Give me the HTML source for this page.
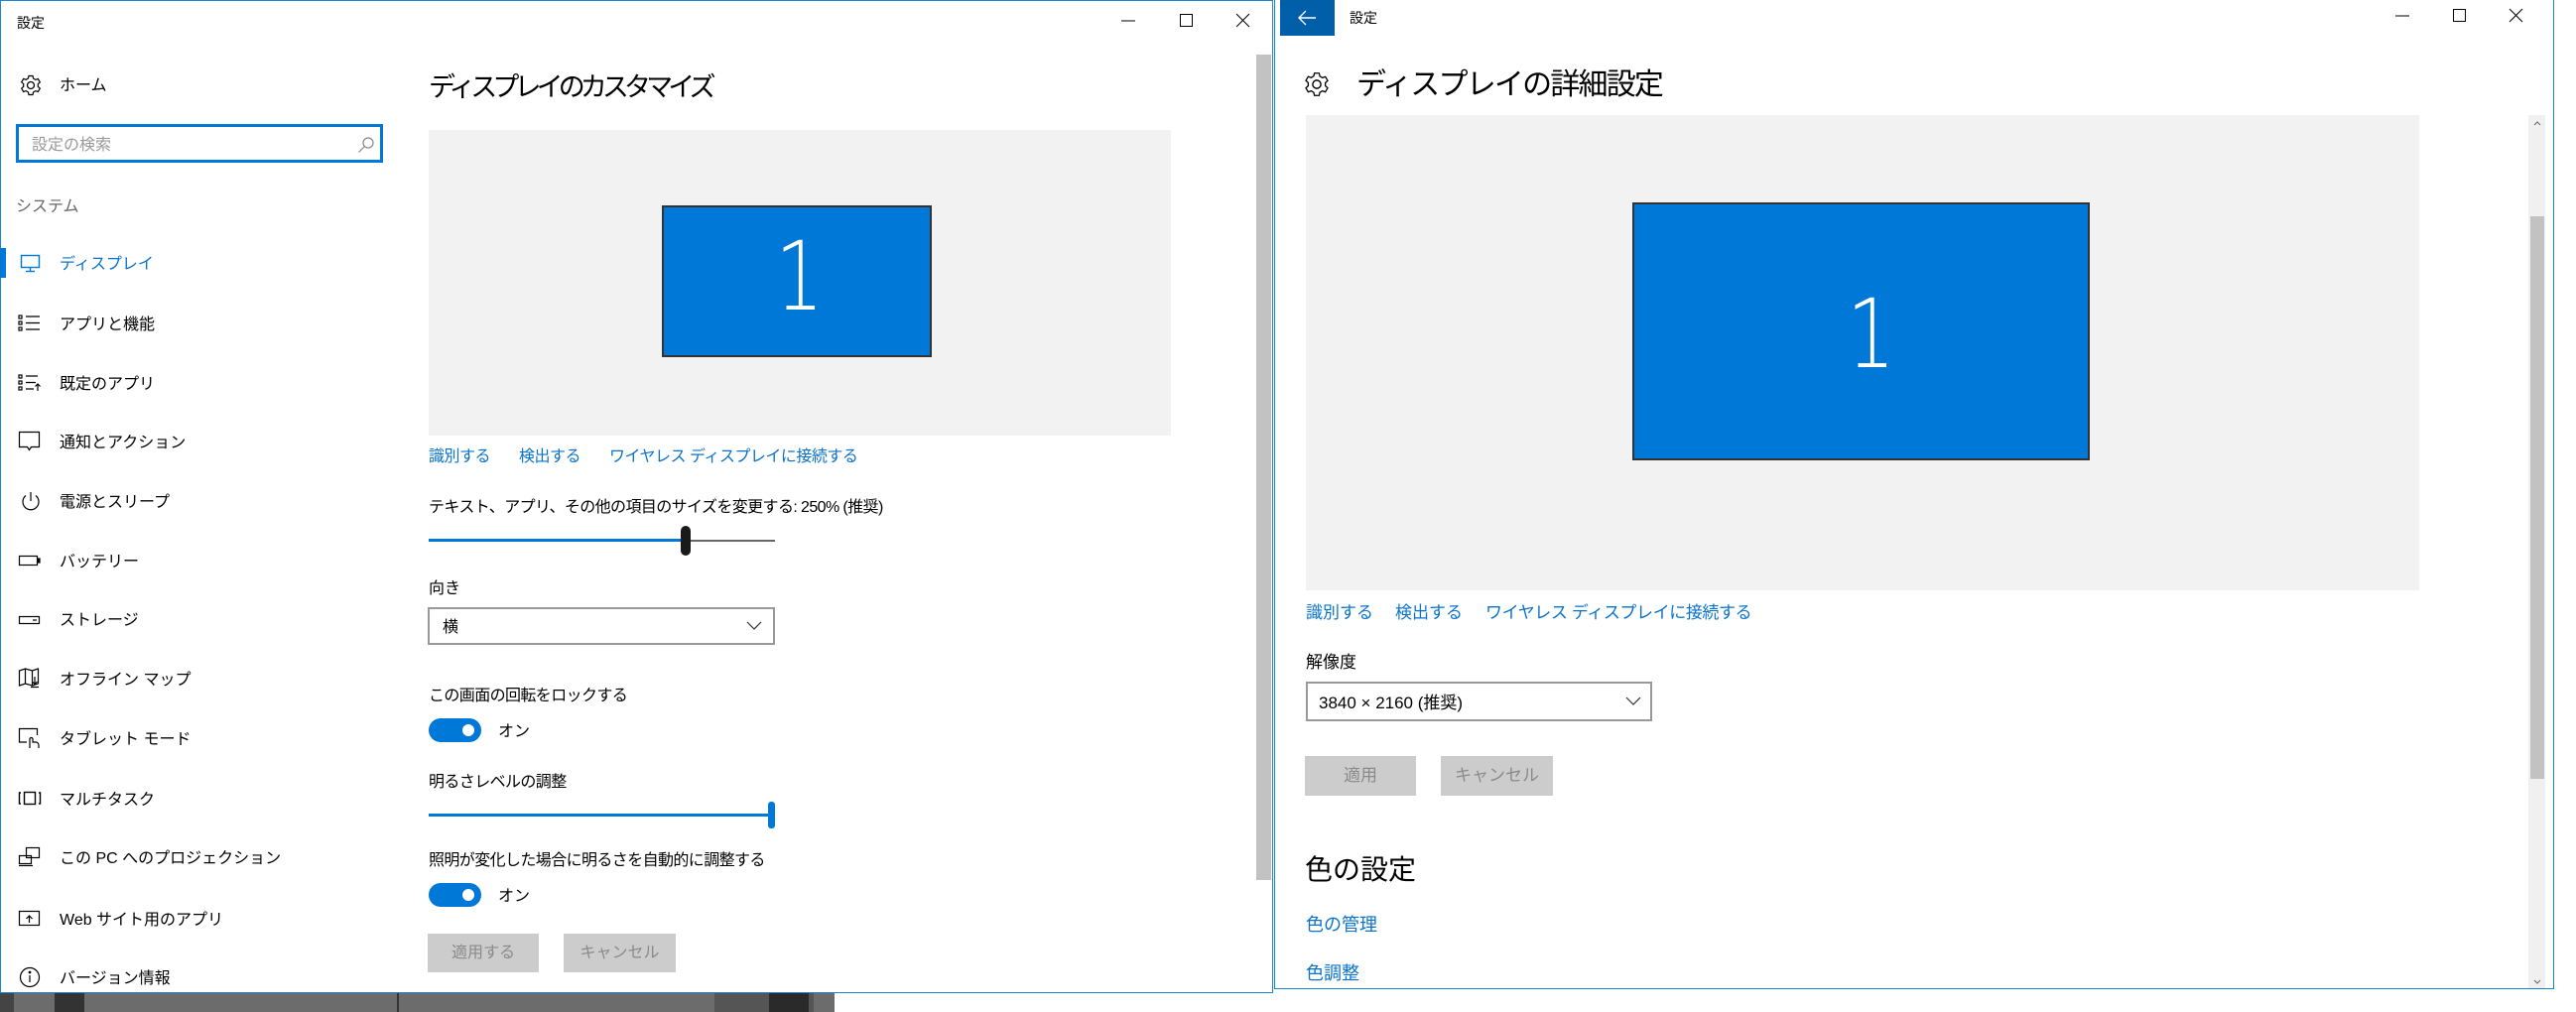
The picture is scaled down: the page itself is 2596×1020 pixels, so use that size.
<!DOCTYPE html>
<html><head><meta charset="utf-8"><style>
*{margin:0;padding:0;box-sizing:border-box}
body{width:2596px;height:1020px;position:relative;background:#fff;overflow:hidden;font-family:"Liberation Sans","Noto Sans CJK JP",sans-serif;color:#000}
.a{position:absolute;white-space:nowrap;line-height:24px;margin-top:2px}
.t{font-size:16px}
.b{color:#0a72cc}
.g{color:#777}
svg{position:absolute}
.btn{position:absolute;background:#ccc;color:#8a8a8a;font-size:16px;text-align:center}
.one{font-family:"DejaVu Sans","Liberation Sans",sans-serif;font-weight:200;color:#fff;font-size:96px;line-height:110px;transform:scaleX(.8)}
</style></head><body>

<div style="position:absolute;left:0;top:1000px;width:841px;height:20px;background:#6c6c6c"></div>
<div style="position:absolute;left:0;top:1000px;width:14px;height:20px;background:#444"></div>
<div style="position:absolute;left:55px;top:1000px;width:30px;height:20px;background:#333"></div>
<div style="position:absolute;left:400px;top:1000px;width:2px;height:20px;background:#333"></div>
<div style="position:absolute;left:720px;top:1000px;width:100px;height:20px;background:#555"></div>
<div style="position:absolute;left:775px;top:1000px;width:40px;height:20px;background:#2a2a2a"></div>

<div style="position:absolute;left:0;top:0;width:1283px;height:1001px;border:1px solid #1a85d6;background:#fff"></div>
<div class="a" style="left:17px;top:9px;font-size:14px">設定</div>
<svg style="left:1130px;top:12px" width="140" height="18"><line x1="0" y1="9" x2="14" y2="9" stroke="#000"/><rect x="59.5" y="2.5" width="12" height="12" fill="none" stroke="#000"/><path d="M116 2 L129 15 M129 2 L116 15" stroke="#000"/></svg>
<div style="position:absolute;left:1266px;top:55px;width:15px;height:832px;background:#c2c2c2"></div>

<svg style="left:20px;top:75px" width="22" height="22" viewBox="0 0 22 22"><circle cx="11" cy="11" r="3.5" fill="none" stroke="#000" stroke-width="1.3"/><path d="M9 1.5h4l.6 2.6 2.2 1.3 2.5-.9 2 3.4-2 1.8v2.6l2 1.8-2 3.4-2.5-.9-2.2 1.3-.6 2.6H9l-.6-2.6-2.2-1.3-2.5.9-2-3.4 2-1.8V9.6L1.7 7.8l2-3.4 2.5.9 2.2-1.3z" fill="none" stroke="#000" stroke-width="1.2"/></svg>
<div class="a t" style="left:60px;top:73px">ホーム</div>
<div style="position:absolute;left:16px;top:125px;width:370px;height:39px;border:3px solid #0078d7"></div>
<div class="a t" style="left:32px;top:133px;color:#9a9a9a">設定の検索</div>
<svg style="left:360px;top:137px" width="18" height="18"><circle cx="11" cy="7" r="5" fill="none" stroke="#888" stroke-width="1.2"/><line x1="7.5" y1="10.5" x2="1.5" y2="16.5" stroke="#888" stroke-width="1.2"/></svg>
<div class="a t" style="left:16px;top:195px;color:#666">システム</div>

<div style="position:absolute;left:0;top:250px;width:6px;height:30px;background:#0078d7"></div>
<svg style="left:20px;top:256px" width="22" height="20"><rect x="1.5" y="1.5" width="18" height="12" fill="none" stroke="#0078d7" stroke-width="1.4"/><line x1="10.5" y1="14" x2="10.5" y2="17" stroke="#0078d7" stroke-width="1.4"/><line x1="6" y1="17.5" x2="15" y2="17.5" stroke="#0078d7" stroke-width="1.4"/></svg>
<div class="a t b" style="left:60px;top:253px">ディスプレイ</div>

<svg style="left:18px;top:316px" width="24" height="20" stroke="#000" stroke-width="1.2" fill="none"><rect x="1" y="2" width="3" height="3"/><rect x="1" y="8" width="3" height="3"/><rect x="1" y="14" width="3" height="3"/><path d="M8 3h14M8 9.5h14M8 16h14"/></svg>
<div class="a t" style="left:60px;top:314px">アプリと機能</div>

<svg style="left:18px;top:376px" width="24" height="20" stroke="#000" stroke-width="1.2" fill="none"><rect x="1" y="2" width="3" height="3"/><rect x="1" y="8" width="3" height="3"/><rect x="1" y="14" width="3" height="3"/><path d="M8 3h12M8 9.5h10M8 16h8M20 18v-7M17.5 13.5l2.5-2.5 2.5 2.5"/></svg>
<div class="a t" style="left:60px;top:374px">既定のアプリ</div>

<svg style="left:18px;top:434px" width="24" height="22" stroke="#000" stroke-width="1.2" fill="none"><path d="M1.5 1.5h20v15h-8l-2 3-2-3h-8z"/></svg>
<div class="a t" style="left:60px;top:433px">通知とアクション</div>

<svg style="left:20px;top:494px" width="22" height="22" stroke="#000" stroke-width="1.2" fill="none"><path d="M6 5.5a8 8 0 1 0 10 0M11 2v9"/></svg>
<div class="a t" style="left:60px;top:493px">電源とスリープ</div>

<svg style="left:18px;top:558px" width="24" height="14" stroke="#000" stroke-width="1.2" fill="none"><rect x="1.5" y="2.5" width="18" height="9"/><rect x="20" y="5" width="2" height="4" fill="#000"/></svg>
<div class="a t" style="left:60px;top:553px">バッテリー</div>

<svg style="left:18px;top:618px" width="24" height="14" stroke="#000" stroke-width="1.2" fill="none"><rect x="1.5" y="3.5" width="20" height="7"/><path d="M15 7h4"/></svg>
<div class="a t" style="left:60px;top:612px">ストレージ</div>

<svg style="left:18px;top:673px" width="24" height="22" stroke="#000" stroke-width="1.2" fill="none"><path d="M1.5 3l6-2 7 2 6-2v15l-6 2-7-2-6 2zM7.5 1v15M14.5 3v15M17 9v7M14.5 14l2.5 2.5 2.5-2.5M13 19.5h8"/></svg>
<div class="a t" style="left:60px;top:672px">オフライン マップ</div>

<svg style="left:18px;top:732px" width="24" height="24" stroke="#000" stroke-width="1.2" fill="none"><path d="M9 16H1.5V2.5h18V9"/><path d="M12 22v-9a1.5 1.5 0 0 1 3 0v3h3a3 3 0 0 1 3 3v3"/></svg>
<div class="a t" style="left:60px;top:732px">タブレット モード</div>

<svg style="left:18px;top:796px" width="24" height="18" stroke="#000" stroke-width="1.4" fill="none"><rect x="6.5" y="2.5" width="11" height="12"/><path d="M3 3H1.5v11H3M21 3h1.5v11H21"/></svg>
<div class="a t" style="left:60px;top:793px">マルチタスク</div>

<svg style="left:18px;top:853px" width="24" height="22" stroke="#000" stroke-width="1.2" fill="none"><rect x="8.5" y="1.5" width="13" height="10"/><rect x="1.5" y="9.5" width="12" height="8"/><path d="M1 19.5h14"/></svg>
<div class="a t" style="left:60px;top:852px">この PC へのプロジェクション</div>

<svg style="left:18px;top:916px" width="24" height="20" stroke="#000" stroke-width="1.2" fill="none"><rect x="1.5" y="2.5" width="20" height="14"/><path d="M11.5 14V7M8.5 10l3-3 3 3"/></svg>
<div class="a t" style="left:60px;top:914px">Web サイト用のアプリ</div>

<svg style="left:19px;top:974px" width="22" height="22" stroke="#000" stroke-width="1.2" fill="none"><circle cx="11" cy="11" r="9.5"/><path d="M11 9v7"/><circle cx="11" cy="6" r=".8" fill="#000"/></svg>
<div class="a t" style="left:60px;top:973px">バージョン情報</div>

<div class="a" style="left:432px;top:68px;font-size:27px;line-height:36px;letter-spacing:-4.9px">ディスプレイのカスタマイズ</div>
<div style="position:absolute;left:432px;top:131px;width:748px;height:308px;background:#f2f2f2"></div>
<div style="position:absolute;left:667px;top:207px;width:272px;height:153px;background:#0078d7;border:2px solid #333"></div>
<div class="a one" style="left:775px;top:222px">1</div>
<div class="a t b" style="left:432px;top:447px;letter-spacing:-.5px">識別する</div>
<div class="a t b" style="left:523px;top:447px;letter-spacing:-.5px">検出する</div>
<div class="a t b" style="left:614px;top:447px;letter-spacing:-.5px">ワイヤレス ディスプレイに接続する</div>
<div class="a t" style="left:432px;top:498px;letter-spacing:-.6px">テキスト、アプリ、その他の項目のサイズを変更する: 250% (推奨)</div>
<div style="position:absolute;left:432px;top:543px;width:258px;height:3px;background:#0078d7"></div>
<div style="position:absolute;left:690px;top:544px;width:91px;height:2px;background:#666"></div>
<div style="position:absolute;left:686px;top:530px;width:10px;height:30px;border-radius:5px;background:#1a1a1a"></div>
<div class="a t" style="left:432px;top:580px">向き</div>
<div style="position:absolute;left:431px;top:612px;width:350px;height:38px;border:2px solid #999"></div>
<div class="a t" style="left:446px;top:619px">横</div>
<svg style="left:752px;top:626px" width="16" height="10"><path d="M1 1l7 7 7-7" fill="none" stroke="#333" stroke-width="1.2"/></svg>
<div class="a t" style="left:432px;top:688px;letter-spacing:-.6px">この画面の回転をロックする</div>
<div style="position:absolute;left:432px;top:724px;width:53px;height:24px;border-radius:12px;background:#0078d7"></div>
<div style="position:absolute;left:466px;top:730px;width:12px;height:12px;border-radius:6px;background:#fff"></div>
<div class="a t" style="left:502px;top:724px">オン</div>
<div class="a t" style="left:432px;top:775px;letter-spacing:-.6px">明るさレベルの調整</div>
<div style="position:absolute;left:432px;top:820px;width:345px;height:3px;background:#0078d7"></div>
<div style="position:absolute;left:774px;top:808px;width:7px;height:27px;border-radius:3px;background:#0078d7"></div>
<div class="a t" style="left:432px;top:854px;letter-spacing:-.6px">照明が変化した場合に明るさを自動的に調整する</div>
<div style="position:absolute;left:432px;top:890px;width:53px;height:24px;border-radius:12px;background:#0078d7"></div>
<div style="position:absolute;left:466px;top:896px;width:12px;height:12px;border-radius:6px;background:#fff"></div>
<div class="a t" style="left:502px;top:890px">オン</div>
<div class="btn" style="left:431px;top:941px;width:112px;height:39px;line-height:39px">適用する</div>
<div class="btn" style="left:568px;top:941px;width:113px;height:39px;line-height:39px">キャンセル</div>

<div style="position:absolute;left:1284px;top:0;width:1290px;height:997px;border:1px solid #1a85d6;border-top:none;background:#fff"></div>
<div style="position:absolute;left:1290px;top:0;width:55px;height:36px;background:#005fa8"></div>
<svg style="left:1306px;top:9px" width="22" height="18"><path d="M20 9H3M10 2L3 9l7 7" fill="none" stroke="#fff" stroke-width="1.4"/></svg>
<div class="a" style="left:1360px;top:4px;font-size:14px">設定</div>
<svg style="left:2414px;top:7px" width="140" height="18"><line x1="0" y1="9" x2="14" y2="9" stroke="#000"/><rect x="58.5" y="2.5" width="12" height="12" fill="none" stroke="#000"/><path d="M115 2 L128 15 M128 2 L115 15" stroke="#000"/></svg>
<div style="position:absolute;left:2548px;top:116px;width:17px;height:880px;background:#f0f0f0"></div>
<div style="position:absolute;left:2550px;top:218px;width:14px;height:567px;background:#c2c2c2"></div>
<svg style="left:2552px;top:120px" width="10" height="8"><path d="M2 6l3-3 3 3" fill="none" stroke="#666"/></svg>
<svg style="left:2552px;top:986px" width="10" height="8"><path d="M2 2l3 3 3-3" fill="none" stroke="#666"/></svg>

<svg style="left:1314px;top:72px" width="26" height="26" viewBox="0 0 22 22"><circle cx="11" cy="11" r="3.5" fill="none" stroke="#000" stroke-width="1.2"/><path d="M9 1.5h4l.6 2.6 2.2 1.3 2.5-.9 2 3.4-2 1.8v2.6l2 1.8-2 3.4-2.5-.9-2.2 1.3-.6 2.6H9l-.6-2.6-2.2-1.3-2.5.9-2-3.4 2-1.8V9.6L1.7 7.8l2-3.4 2.5.9 2.2-1.3z" fill="none" stroke="#000" stroke-width="1.1"/></svg>
<div class="a" style="left:1367px;top:64px;font-size:30px;line-height:40px;letter-spacing:-1.8px">ディスプレイの詳細設定</div>
<div style="position:absolute;left:1316px;top:116px;width:1122px;height:479px;background:#f2f2f2"></div>
<div style="position:absolute;left:1645px;top:204px;width:461px;height:260px;background:#0078d7;border:2px solid #333"></div>
<div class="a one" style="left:1855px;top:280px">1</div>
<div class="a b" style="left:1316px;top:604px;font-size:17px">識別する</div>
<div class="a b" style="left:1406px;top:604px;font-size:17px">検出する</div>
<div class="a b" style="left:1497px;top:604px;font-size:17px;letter-spacing:-.4px">ワイヤレス ディスプレイに接続する</div>
<div class="a" style="left:1316px;top:654px;font-size:17px">解像度</div>
<div style="position:absolute;left:1316px;top:687px;width:349px;height:40px;border:2px solid #999"></div>
<div class="a" style="left:1329px;top:695px;font-size:17px">3840 × 2160 (推奨)</div>
<svg style="left:1638px;top:702px" width="16" height="10"><path d="M1 1l7 7 7-7" fill="none" stroke="#333" stroke-width="1.2"/></svg>
<div class="btn" style="left:1315px;top:762px;width:112px;height:40px;line-height:40px;font-size:17px">適用</div>
<div class="btn" style="left:1452px;top:762px;width:113px;height:40px;line-height:40px;font-size:17px">キャンセル</div>
<div class="a" style="left:1315px;top:856px;font-size:28px;line-height:38px">色の設定</div>
<div class="a b" style="left:1316px;top:918px;font-size:18px">色の管理</div>
<div class="a b" style="left:1316px;top:967px;font-size:18px">色調整</div>
</body></html>
